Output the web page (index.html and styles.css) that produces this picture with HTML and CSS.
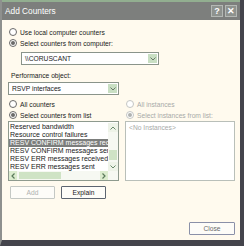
FILE: index.html
```html
<!DOCTYPE html>
<html lang="en">

<head>
    <meta charset="UTF-8">
    <meta name="viewport" content="width=device-width, initial-scale=1.0">
    <title>Add Counters</title>
    <link rel="stylesheet" href="styles.css">
</head>

<body>
    <div class="window">
        <div class="titlebar">
            <span class="title">Add Counters</span>
            <div class="tbtns">
                <span class="tbtn">?</span>
                <span class="tbtn">&#x2715;</span>
            </div>
        </div>

        <div class="content">
            <div class="radio"><span class="circle"></span>Use local computer counters</div>
            <div class="radio r2"><span class="circle on"></span>Select counters from computer:</div>

            <div class="combo c1">
                <span class="val">\\CORUSCANT</span>
                <span class="drop"><svg width="6" height="4" viewBox="0 0 6 4"><path d="M0.5 0.5 L3 3 L5.5 0.5" fill="none" stroke="#6a7a6a" stroke-width="1"/></svg></span>
            </div>

            <div class="label">Performance object:</div>
            <div class="combo c2">
                <span class="val">RSVP interfaces</span>
                <span class="drop"><svg width="6" height="4" viewBox="0 0 6 4"><path d="M0.5 0.5 L3 3 L5.5 0.5" fill="none" stroke="#6a7a6a" stroke-width="1"/></svg></span>
            </div>

            <div class="cols">
                <div class="col">
                    <div class="radio"><span class="circle"></span>All counters</div>
                    <div class="radio r2"><span class="circle on"></span>Select counters from list</div>
                    <div class="list">
                        <ul class="items">
                            <li>Reserved bandwidth</li>
                            <li>Resource control failures</li>
                            <li class="sel">RESV CONFIRM messages received</li>
                            <li>RESV CONFIRM messages sent</li>
                            <li>RESV ERR messages received</li>
                            <li>RESV ERR messages sent</li>
                        </ul>
                        <div class="vscroll">
                            <span class="arr"><svg width="6" height="4" viewBox="0 0 6 4"><path d="M0.5 3.5 L3 1 L5.5 3.5" fill="none" stroke="#6a8a6a" stroke-width="1"/></svg></span>
                            <span class="track"><span class="vthumb"></span></span>
                            <span class="arr"><svg width="6" height="4" viewBox="0 0 6 4"><path d="M0.5 0.5 L3 3 L5.5 0.5" fill="none" stroke="#6a8a6a" stroke-width="1"/></svg></span>
                        </div>
                        <div class="hscroll">
                            <span class="arr"><svg width="4" height="6" viewBox="0 0 4 6"><path d="M3.5 0.5 L1 3 L3.5 5.5" fill="none" stroke="#5a7a5a" stroke-width="1.2"/></svg></span>
                            <span class="htrack"><span class="hthumb"></span></span>
                            <span class="arr"><svg width="4" height="6" viewBox="0 0 4 6"><path d="M0.5 0.5 L3 3 L0.5 5.5" fill="none" stroke="#5a7a5a" stroke-width="1.2"/></svg></span>
                        </div>
                        <div class="corner"></div>
                    </div>
                </div>

                <div class="col right">
                    <div class="radio off"><span class="circle"></span>All instances</div>
                    <div class="radio r2 off"><span class="circle on"></span>Select instances from list:</div>
                    <div class="inst">&lt;No Instances&gt;</div>
                </div>
            </div>

            <div class="btns">
                <button class="btn dis">Add</button>
                <button class="btn">Explain</button>
            </div>

            <div class="footer">
                <button class="btn close">Close</button>
            </div>
        </div>
    </div>
</body>

</html>
```

FILE: styles.css
```css
*{
    box-sizing: border-box;
    font-family: "Liberation Sans", Arial, sans-serif;
}
body{
    margin: 0;
}
.window{
    width: 244px;
    height: 246px;
    display: flex;
    flex-direction: column;
    border-left: 2px solid #8e908e;
    border-right: 4px solid #44444c;
    border-bottom: 6px solid #44444c;
    background-color: #fffaee;
}
.titlebar{
    height: 20px;
    display: flex;
    align-items: center;
    justify-content: space-between;
    background-color: #7d7f7d;
    border-top: 2px solid #92ae90;
    padding: 0 3px 0 3px;
}
.title{
    color: #fff;
    font-size: 8.3px;
}
.tbtns{
    display: flex;
    gap: 2px;
}
.tbtn{
    width: 12px;
    height: 12px;
    border: 1px solid #b4b8b4;
    background-color: #8e928e;
    color: #fff;
    font-size: 9px;
    font-weight: bold;
    display: flex;
    align-items: center;
    justify-content: center;
}
.content{
    flex: 1;
    display: flex;
    flex-direction: column;
    padding: 7px 5px 5px 6px;
    font-size: 6.7px;
    color: #1a1a1a;
}
.radio{
    height: 10px;
    display: flex;
    align-items: center;
    gap: 3px;
    margin-left: 1px;
    white-space: nowrap;
}
.r2{
    margin-top: 1px;
}
.circle{
    width: 8px;
    height: 8px;
    border: 1px solid #6a6a6a;
    border-radius: 50%;
    background-color: #fff;
    display: flex;
    align-items: center;
    justify-content: center;
    flex: none;
}
.circle.on::after{
    content: "";
    width: 4px;
    height: 4px;
    border-radius: 50%;
    background-color: #6a6a6a;
}
.off{
    color: #a8aaa8;
}
.off .circle{
    border-color: #c4c6c4;
}
.off .circle.on::after{
    background-color: #b0b2b0;
}
.combo{
    height: 13px;
    display: flex;
    align-items: center;
    justify-content: space-between;
    border: 1px solid #8a948a;
    background-color: #fff;
    padding: 1px 1px 1px 3px;
}
.c1{
    margin: 4px 0 0 13px;
    width: 138px;
}
.c2{
    margin-top: 2px;
    width: 111px;
}
.drop{
    width: 9px;
    height: 9px;
    background-color: #c9dfc3;
    display: flex;
    align-items: center;
    justify-content: center;
}
.label{
    height: 10px;
    display: flex;
    align-items: center;
    margin: 5px 0 0 3px;
}
.cols{
    display: flex;
    gap: 6px;
    margin-top: 4px;
}
.col{
    width: 111px;
    display: flex;
    flex-direction: column;
}
.col.right{
    width: 110px;
}
.list{
    margin-top: 1px;
    height: 60px;
    border: 1px solid #8e9a8e;
    background-color: #fff;
    display: grid;
    grid-template-columns: 1fr 10px;
    grid-template-rows: 1fr 9px;
    padding: 1px 0 0 0;
}
.items{
    list-style-type: none;
    margin: 0;
    padding: 0;
    overflow: hidden;
    font-size: 7px;
}
.items li{
    height: 8px;
    line-height: 8px;
    padding-left: 1px;
    white-space: nowrap;
}
.items li.sel{
    background-color: #7c7e7c;
    color: #fff;
}
.vscroll{
    display: flex;
    flex-direction: column;
    background-color: #f6f8f2;
}
.arr{
    height: 9px;
    width: 10px;
    display: flex;
    align-items: center;
    justify-content: center;
    background-color: #eef3e8;
}
.hscroll .arr{
    height: 9px;
    width: 8px;
    background-color: #dceccf;
}
.track{
    flex: 1;
    display: flex;
    flex-direction: column;
    justify-content: flex-end;
    padding-bottom: 2px;
}
.vthumb{
    height: 10px;
    margin: 0 1px;
    background-color: #cfe3c5;
}
.hscroll{
    display: flex;
    background-color: #f6f8f2;
}
.htrack{
    flex: 1;
    display: flex;
    padding: 1px 2px;
}
.hthumb{
    width: 42px;
    background-color: #cfe3c5;
}
.corner{
    background-color: #f6f8f2;
}
.inst{
    margin-top: 1px;
    height: 60px;
    border: 1px solid #b9bfb9;
    background-color: #fff;
    color: #a8aaa8;
    padding: 2px 0 0 3px;
}
.btns{
    display: flex;
    gap: 6px;
    margin: 5px 0 0 2px;
}
.btn{
    width: 45px;
    height: 13px;
    padding: 0;
    font-size: 6.7px;
    color: #1a1a1a;
    background-color: #fdfcf8;
    border: 1px solid #5c6470;
    border-radius: 1px;
}
.btn.dis{
    color: #b0b2b0;
    border-color: #c4c8c4;
}
.footer{
    margin-top: auto;
    display: flex;
    justify-content: flex-end;
}
.close{
    width: 46px;
    border-color: #8a90a8;
    color: #6a6a6a;
}
```
